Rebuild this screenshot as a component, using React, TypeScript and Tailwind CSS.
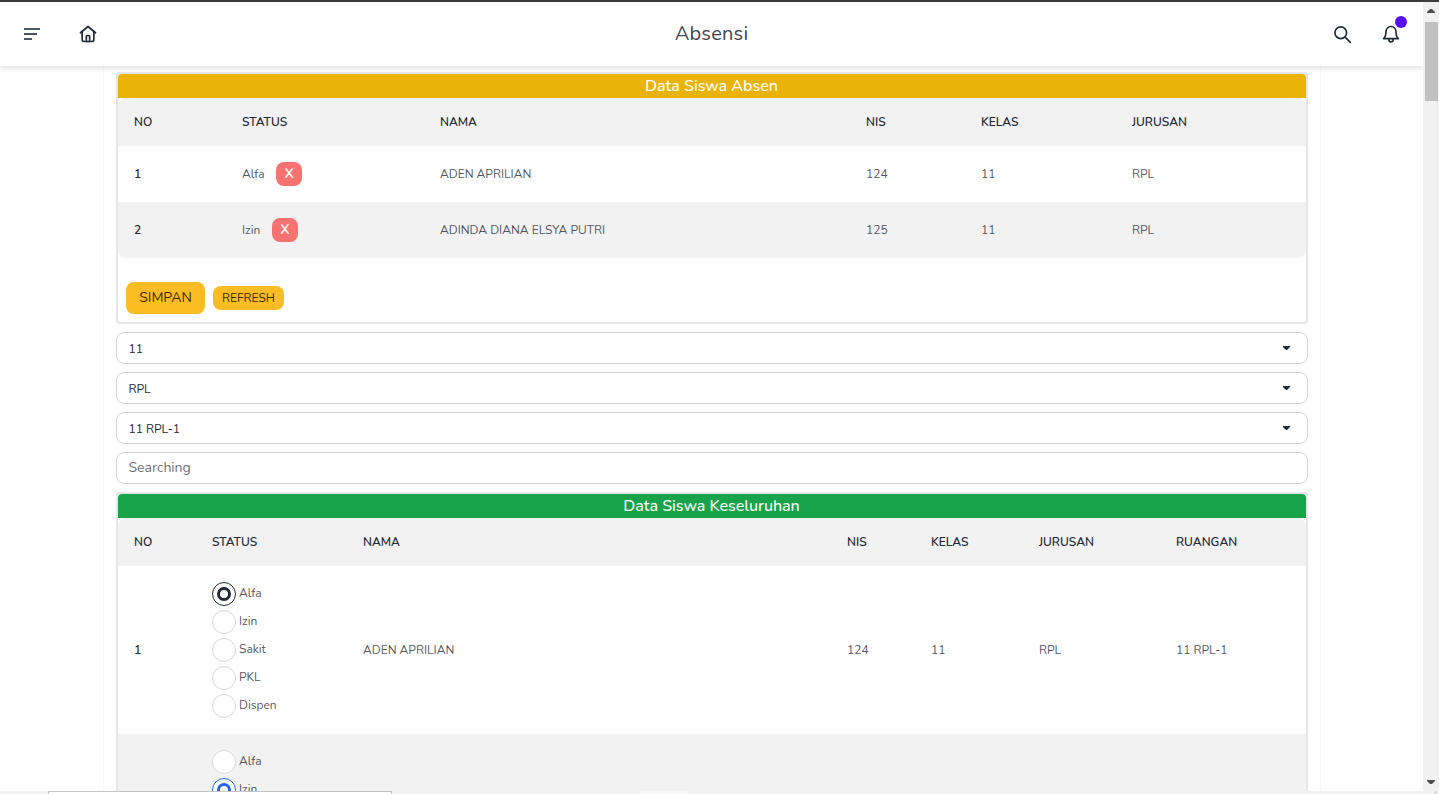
import React from "react";

const text = "text-[#1f2937cc]";

function Th({ children }: { children: React.ReactNode }) {
  return <th className="px-4 text-left text-xs font-[650] uppercase text-[#1f2937]">{children}</th>;
}

function Td({ children, bold }: { children: React.ReactNode; bold?: boolean }) {
  return (
    <td className={`px-4 text-xs whitespace-nowrap ${bold ? "font-[650] text-[#1f2937]" : text}`}>{children}</td>
  );
}

function Radio({ state }: { state?: "dark" | "blue" }) {
  if (state === "dark") {
    return (
      <span className="flex h-6 w-6 items-center justify-center rounded-full border border-[#1f2937] bg-white">
        <span className="h-[14px] w-[14px] rounded-full border-[3.500px] border-[#1f2937]" />
      </span>
    );
  }
  if (state === "blue") {
    return (
      <span className="flex h-6 w-6 items-center justify-center rounded-full border border-[#2563eb] bg-white">
        <span className="h-[14px] w-[14px] rounded-full border-[3.500px] border-[#2563eb]" />
      </span>
    );
  }
  return <span className="h-6 w-6 rounded-full border border-[#d9d9d9] bg-white" />;
}

function RadioRow({ label, state }: { label: string; state?: "dark" | "blue" }) {
  return (
    <div className="flex h-7 items-center">
      <Radio state={state} />
      <span className={`ml-[3px] -translate-y-px text-xs ${text}`}>{label}</span>
    </div>
  );
}

function Select({ label }: { label: string }) {
  return (
    <div className="flex h-8 items-center justify-between rounded-lg border border-[#d4d4d8] bg-white pl-[11.500px] pr-[17px]">
      <span className="pt-0.5 text-xs text-[#1f2937]">{label}</span>
      <svg width="7" height="4" viewBox="0 0 7 4" className="fill-[#1f2937]">
        <path d="M0 0h7v1L4 4H3L0 1z" />
      </svg>
    </div>
  );
}

function Card({ title, color, children }: { title: string; color: string; children: React.ReactNode }) {
  return (
    <section className="rounded-sm border-2 border-[#e5e6ea] bg-white">
      <h2 className={`flex h-6 items-center justify-center rounded-t-sm pr-px text-base font-medium leading-6 text-white ${color}`}>
        {title}
      </h2>
      {children}
    </section>
  );
}

const absen = [
  { no: 1, status: "Alfa", nama: "ADEN APRILIAN", nis: "124" },
  { no: 2, status: "Izin", nama: "ADINDA DIANA ELSYA PUTRI", nis: "125" },
];

export default function App() {
  return (
    <div className="relative flex h-[794px] w-full flex-col overflow-hidden bg-white font-['Nunito','Lato','Liberation_Sans',sans-serif]">
      <div className="h-0.5 shrink-0 bg-[#3c3c3c]" />
      <div className="flex min-h-0 flex-1">
        <div className="relative min-w-0 flex-1">
          <header className="relative z-10 flex h-16 items-center bg-white px-6 shadow-[0_2px_6px_rgba(0,0,0,0.14)]">
            <div className="flex flex-1 items-center gap-[37px] text-[#1f2937]">
              <svg width="17" height="14" viewBox="0 0 17 14" fill="none" stroke="#4b5563" strokeWidth="2">
                <path d="M0 2h16M0 7h13M0 12h8" />
              </svg>
              <svg width="20" height="20" viewBox="0 0 24 24" fill="none" stroke="#1f2937" strokeWidth="2" strokeLinecap="round" strokeLinejoin="round">
                <path d="M3 10.500 12 3l9 7.500" />
                <path d="M5 9v10a2 2 0 0 0 2 2h10a2 2 0 0 0 2-2V9" />
                <path d="M10 21v-6a1 1 0 0 1 1-1h2a1 1 0 0 1 1 1v6" />
              </svg>
            </div>
            <h1 className="text-xl font-normal tracking-[0.01em] text-[#1f2937e6]">Absensi</h1>
            <div className="flex flex-1 items-center justify-end gap-[29px]">
              <svg width="20" height="20" viewBox="0 0 24 24" fill="none" stroke="#1f2937" strokeWidth="2" strokeLinecap="round">
                <circle cx="10.500" cy="10.500" r="7" />
                <path d="m16 16 6 6" />
              </svg>
              <span className="relative -mr-0.5 block h-5 w-5">
                <svg width="20" height="20" viewBox="0 0 24 24" fill="none" stroke="#1f2937" strokeWidth="2" strokeLinecap="round" strokeLinejoin="round">
                  <path d="M12 3a6 6 0 0 0-6 6c0 5-1 7-3 8.500h18C19 16 18 14 18 9a6 6 0 0 0-6-6z" />
                  <path d="M9.500 18v1a2.500 2.500 0 0 0 5 0v-1" />
                </svg>
                <span className="absolute -right-1.5 -top-2 h-3 w-3 rounded-full bg-[#570df8]" />
              </span>
            </div>
          </header>

          <main className="ml-[103px] mr-[102px] flex flex-col gap-2 border-x border-[#f9f9f9] px-3 pt-[6px]">
            <Card title="Data Siswa Absen" color="bg-[#eab308]">
              <div className="overflow-hidden rounded-lg">
                <table className="w-full table-fixed border-separate border-spacing-0">
                  <colgroup>
                    <col className="w-[108px]" />
                    <col className="w-[198px]" />
                    <col className="w-[426px]" />
                    <col className="w-[115px]" />
                    <col className="w-[151px]" />
                    <col />
                  </colgroup>
                  <thead>
                    <tr className="h-12 bg-[#f2f2f2]">
                      <Th>No</Th>
                      <Th>Status</Th>
                      <Th>Nama</Th>
                      <Th>NIS</Th>
                      <Th>Kelas</Th>
                      <Th>Jurusan</Th>
                    </tr>
                  </thead>
                  <tbody>
                    {absen.map((r, i) => (
                      <tr key={r.no} className={`h-14 ${i === 1 ? "bg-[#f2f2f2]" : ""}`}>
                        <Td bold>{r.no}</Td>
                        <Td>
                          <span className="flex items-center gap-[11.500px]">
                            {r.status}
                            <button className="flex h-6 w-[26px] items-center justify-center rounded-lg bg-[#f87272] text-sm font-semibold text-white">
                              X
                            </button>
                          </span>
                        </Td>
                        <Td>{r.nama}</Td>
                        <Td>{r.nis}</Td>
                        <Td>11</Td>
                        <Td>RPL</Td>
                      </tr>
                    ))}
                  </tbody>
                </table>
              </div>
              <div className="flex items-center gap-2 px-2 pb-2 pt-6">
                <button className="h-8 w-[79px] rounded-lg bg-[#fbbd23] text-sm text-[#382800]">SIMPAN</button>
                <button className="h-6 w-[71px] rounded-lg bg-[#fbbd23] text-xs text-[#382800]">REFRESH</button>
              </div>
            </Card>

            <Select label="11" />
            <Select label="RPL" />
            <Select label="11 RPL-1" />
            <div className="flex h-8 items-center rounded-lg border border-[#d4d4d8] bg-white pl-[11.500px] pr-3">
              <span className="text-sm text-[#1f2937b3]">Searching</span>
            </div>

            <Card title="Data Siswa Keseluruhan" color="bg-[#16a34a]">
              <div className="overflow-hidden rounded-lg">
                <table className="w-full table-fixed border-separate border-spacing-0">
                  <colgroup>
                    <col className="w-[78px]" />
                    <col className="w-[151px]" />
                    <col className="w-[484px]" />
                    <col className="w-[84px]" />
                    <col className="w-[108px]" />
                    <col className="w-[137px]" />
                    <col />
                  </colgroup>
                  <thead>
                    <tr className="h-12 bg-[#f2f2f2]">
                      <Th>No</Th>
                      <Th>Status</Th>
                      <Th>Nama</Th>
                      <Th>NIS</Th>
                      <Th>Kelas</Th>
                      <Th>Jurusan</Th>
                      <Th>Ruangan</Th>
                    </tr>
                  </thead>
                  <tbody>
                    <tr className="h-[168px]">
                      <Td bold>1</Td>
                      <Td>
                        <RadioRow label="Alfa" state="dark" />
                        <RadioRow label="Izin" />
                        <RadioRow label="Sakit" />
                        <RadioRow label="PKL" />
                        <RadioRow label="Dispen" />
                      </Td>
                      <Td>ADEN APRILIAN</Td>
                      <Td>124</Td>
                      <Td>11</Td>
                      <Td>RPL</Td>
                      <Td>11 RPL-1</Td>
                    </tr>
                    <tr className="h-[168px] bg-[#f2f2f2]">
                      <Td bold>2</Td>
                      <Td>
                        <RadioRow label="Alfa" />
                        <RadioRow label="Izin" state="blue" />
                        <RadioRow label="Sakit" />
                        <RadioRow label="PKL" />
                        <RadioRow label="Dispen" />
                      </Td>
                      <Td>ADINDA DIANA ELSYA PUTRI</Td>
                      <Td>125</Td>
                      <Td>11</Td>
                      <Td>RPL</Td>
                      <Td>11 RPL-1</Td>
                    </tr>
                  </tbody>
                </table>
              </div>
            </Card>
          </main>
        </div>

        <aside className="relative z-20 flex w-4 shrink-0 flex-col items-center bg-[#f1f1f1]">
          <svg width="8" height="4" viewBox="0 0 8 4" className="mt-[7px] fill-[#505050]">
            <path d="M3 0h2l3 3v1H0V3z" />
          </svg>
          <div className="ml-[2px] mt-[9px] h-[79px] w-[13px] self-start bg-[#c1c1c1]" />
          <div className="flex-1" />
          <svg width="8" height="4" viewBox="0 0 8 4" className="mb-[7px] fill-[#505050]">
            <path d="M0 0h8v1L5 4H3L0 1z" />
          </svg>
        </aside>
      </div>

      <footer className="relative z-30 flex h-[3px] shrink-0 bg-[#f1f1f1]">
        <div className="ml-[48px] w-[344px] border-l border-r border-t border-[#c4c4c4] bg-white" />
        <div className="ml-[248px] w-[48px] bg-[#f8f8f8]" />
        <div className="ml-auto mr-[3px] w-px bg-[#c4c4c4]" />
      </footer>
    </div>
  );
}
